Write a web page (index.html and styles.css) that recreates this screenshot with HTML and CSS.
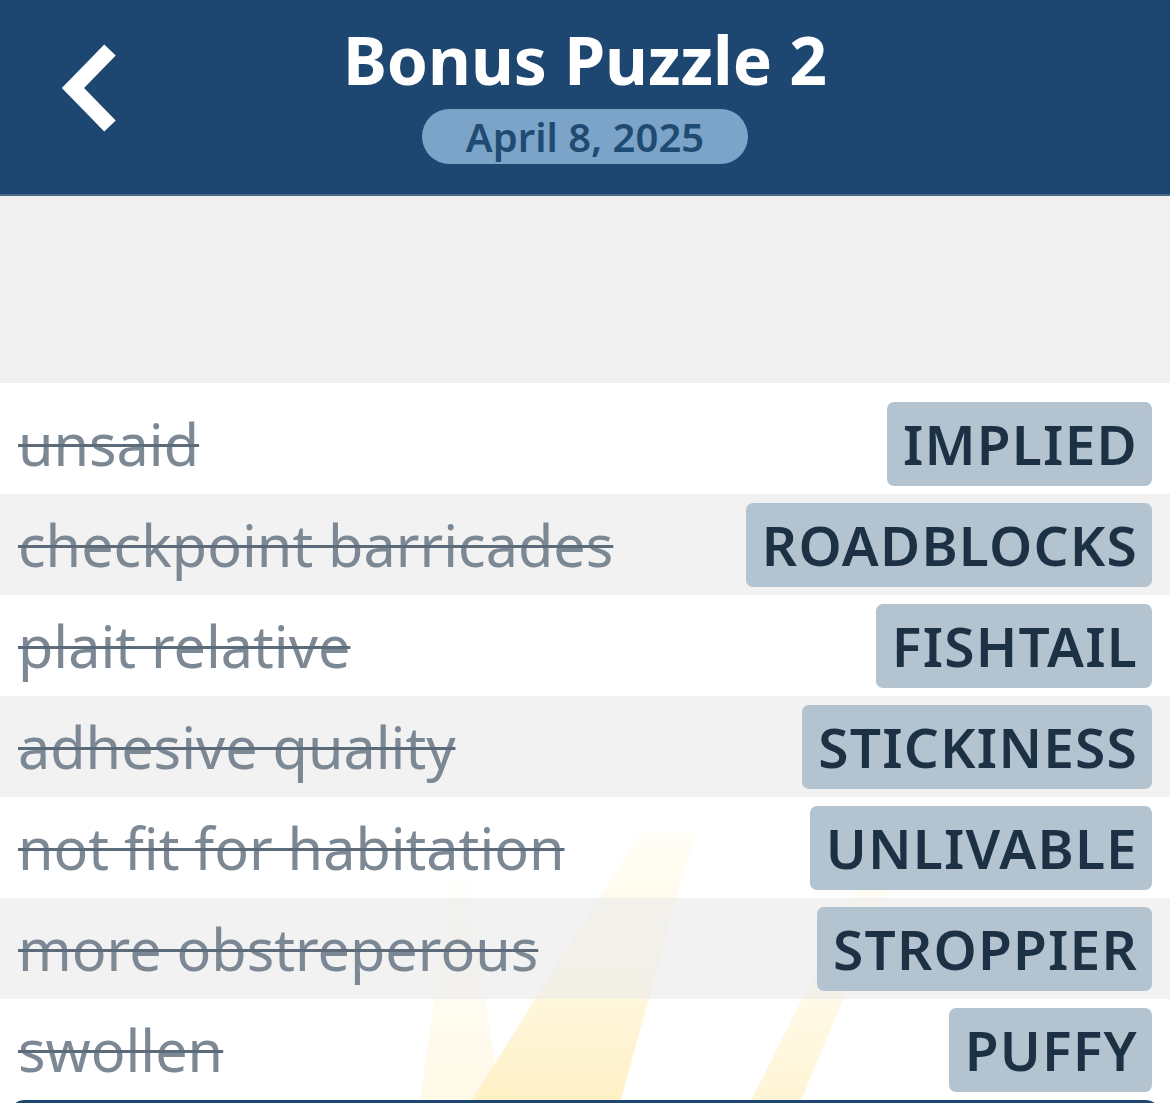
FILE: index.html
```html
<!DOCTYPE html>
<html lang="en">
<head>
	<meta charset="UTF-8" />
	<title>Bonus Puzzle 2</title>
	<link rel="stylesheet" href="styles.css">
</head>
<body>
<div class="screen">
	<div class="header">
		<a href="#" class="back">
			<svg width="70" height="90" viewBox="55 45 70 90"><polyline points="112,52 75,90 112,128" fill="none" stroke="#fff" stroke-width="16" stroke-linejoin="miter"/></svg>
		</a>
		<h1 class="title">Bonus Puzzle 2</h1>
		<div class="date">April 8, 2025</div>
	</div>
	<div class="blank"></div>
	<svg class="rays" width="1170" height="300" viewBox="0 0 1170 300">
		<defs>
			<linearGradient id="fade" x1="0" y1="1" x2="0" y2="0">
				<stop offset="0" stop-color="#ffeaa8" stop-opacity="1"/>
				<stop offset="1" stop-color="#fff2c8" stop-opacity="0.25"/>
			</linearGradient>
		</defs>
		<polygon points="470,300 620,300 695,30 640,30" fill="url(#fade)"/>
		<polygon points="750,300 800,300 900,60 870,60" fill="url(#fade)" opacity="0.75"/>
		<polygon points="420,300 500,300 470,80 450,80" fill="url(#fade)" opacity="0.45"/>
	</svg>
	<ul class="list">
		<li class="row first"><span class="clue">unsaid</span><span class="word">IMPLIED</span></li>
		<li class="row alt"><span class="clue">checkpoint barricades</span><span class="word">ROADBLOCKS</span></li>
		<li class="row"><span class="clue">plait relative</span><span class="word">FISHTAIL</span></li>
		<li class="row alt"><span class="clue">adhesive quality</span><span class="word">STICKINESS</span></li>
		<li class="row"><span class="clue">not fit for habitation</span><span class="word">UNLIVABLE</span></li>
		<li class="row alt"><span class="clue">more obstreperous</span><span class="word">STROPPIER</span></li>
		<li class="row"><span class="clue">swollen</span><span class="word">PUFFY</span></li>
	</ul>
	<div class="footer"></div>
</div>
</body>
</html>
```
FILE: styles.css
```css
html,body{margin:0;padding:0;}
body{background:#fff;font-family:'Noto Sans','Open Sans',sans-serif;overflow:hidden;}
.screen{position:relative;width:1170px;height:1103px;overflow:hidden;}
.header{position:relative;height:196px;background:#1d4670;border-bottom:2px solid #4b6a8a;box-sizing:border-box;display:flex;flex-direction:column;align-items:center;}
.back{position:absolute;left:53px;top:43px;display:block;line-height:0;}
.title{margin:15px 0 0;color:#fff;font-size:66px;line-height:88px;font-weight:700;letter-spacing:0;}
.date{margin-top:6px;width:326px;height:55px;border-radius:28px;background:#7ba4c8;color:#1f4a72;font-size:40px;line-height:55px;font-weight:600;text-align:center;}
.blank{height:187px;background:#f0f0f0;}
.rays{position:absolute;left:0;bottom:0;z-index:0;}
.list{position:relative;z-index:1;margin:0;padding:0;list-style:none;}
.row{display:flex;align-items:center;justify-content:space-between;height:101px;padding:0 18px;box-sizing:border-box;background:rgba(255,255,255,0.35);}
.row.first{height:111px;padding-top:10px;}
.row.alt{background:rgba(238,238,238,0.75);}
.clue{color:#7c8994;font-size:57.5px;line-height:70px;text-decoration:line-through;text-decoration-color:#5b6b7a;text-decoration-thickness:3px;}
.word{height:84px;padding:0 14px 0 16px;border-radius:7px;background:#b3c3d0;color:#1c3144;font-size:55px;line-height:84px;font-weight:600;letter-spacing:1.2px;}
.footer{position:relative;z-index:1;height:20px;margin:0 10px;background:#1d4670;border-radius:14px 14px 0 0;}
```
